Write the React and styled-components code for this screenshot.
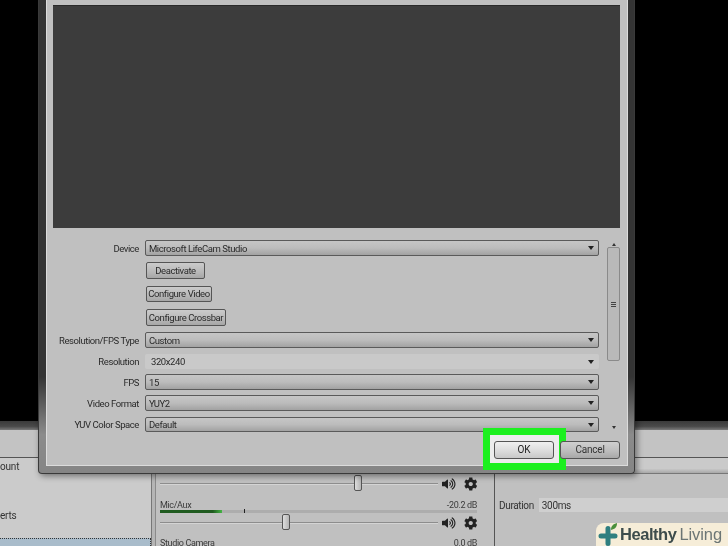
import React from 'react';
import styled, { createGlobalStyle } from 'styled-components';
import { FaVolumeUp, FaCog } from 'react-icons/fa';

const Global = createGlobalStyle`
  html, body { margin: 0; padding: 0; background: #000; }
  * { box-sizing: border-box; }
`;

const Page = styled.div`
  position: relative;
  width: 728px;
  height: 546px;
  overflow: hidden;
  display: flex;
  flex-direction: column;
  background: #c2c2c2;
  font-family: Roboto, "Liberation Sans", sans-serif;
  font-size: 9.5px;
  letter-spacing: -.42px;
  color: #222;
  filter: blur(.3px);
`;

const Preview = styled.div`
  height: 421px;
  flex: none;
  background: #000;
`;
const PreviewEdge = styled.div`
  height: 9px;
  flex: none;
  background: linear-gradient(#3a3a3a, #4a4a4a 60%, #7a7a7a);
`;
const Band = styled.div`
  height: 28px;
  flex: none;
  background: #c3c3c3;
  border-bottom: 1px solid #555;
`;
const Workspace = styled.div`
  flex: 1;
  display: flex;
  min-height: 0;
`;
const ScenePanel = styled.div`
  width: 151px;
  flex: none;
  background: #cbcbcb;
  display: flex;
  flex-direction: column;
  align-items: flex-start;
  padding-top: 3px;
`;
const SceneItem = styled.div`
  height: ${p => p.$h}px;
  white-space: nowrap;
  font-size: 10px;
  letter-spacing: -.2px;
  color: #333;
`;
const SceneSelected = styled.div`
  align-self: stretch;
  flex: 1;
  background: #a9bccb;
  border: 1px dotted #333;
  border-bottom: none;
  border-left: none;
`;
const Splitter = styled.div`
  width: 7px;
  flex: none;
  background: linear-gradient(90deg, #777 0 1px, #b5b5b5 1px 4px, #8a8a8a 4px 5px, #c0c0c0 5px);
`;
const Mixer = styled.div`
  width: 337px;
  flex: none;
  background: #c0c0c0;
  border-right: 1px solid #555;
  padding: 0 17px 0 2px;
  display: flex;
  flex-direction: column;
`;
const Spacer = styled.div`
  height: ${p => p.$h}px;
  flex: none;
`;
const ChannelHead = styled.div`
  height: 11px;
  display: flex;
  justify-content: space-between;
  align-items: center;
  font-size: 9px;
  letter-spacing: -.35px;
  color: #3a3a3a;
  flex: none;
`;
const Meter = styled.div`
  position: relative;
  height: 3px;
  margin: 0;
  flex: none;
  background: #adadad;
`;
const MeterFill = styled.div`
  height: 100%;
  background: linear-gradient(90deg, #1f5a1f 85%, #45b545);
`;
const MeterPeak = styled.div`
  position: absolute;
  top: -1px;
  width: 1px;
  height: 4px;
  background: #222;
`;
const SliderRow = styled.div`
  height: 17px;
  flex: none;
  display: flex;
  align-items: center;
  gap: 4px;
  color: #222;
`;
const Track = styled.div`
  position: relative;
  width: 278px;
  height: 2px;
  background: #8d8d8d;
  border-bottom: 1px solid #d4d4d4;
  flex: none;
`;
const Thumb = styled.div`
  position: absolute;
  top: -8px;
  width: 8px;
  height: 16px;
  border: 1px solid #555;
  border-radius: 2px;
  background: linear-gradient(90deg, #ddd, #b5b5b5);
`;
const TransitionPanel = styled.div`
  flex: 1;
  display: flex;
  flex-direction: column;
  background: #c0c0c0;
`;
const TabStrip = styled.div`
  height: 16px;
  flex: none;
  background: linear-gradient(#cacaca 70%, #a8a8a8);
  border-bottom: 1px solid #777;
`;
const DurationRow = styled.div`
  display: flex;
  align-items: center;
  gap: 5px;
  margin: 24px 0 0 4px;
  font-size: 10px;
  letter-spacing: -.35px;
  color: #333;
`;
const DurationField = styled.div`
  flex: 1;
  height: 14px;
  background: #cfcfcf;
  padding-left: 3px;
  line-height: 15px;
`;

const Dialog = styled.div`
  position: absolute;
  left: 38px;
  top: -8px;
  width: 597px;
  height: 482px;
  padding: 0 6px 7px 7px;
  border: 1px solid #3a3a3a;
  border-top: none;
  border-radius: 0 0 4px 4px;
  background: linear-gradient(#343434 0, #343434 80%, #8b8b8b 92%, #858585);
  box-shadow: 2px 2px 6px rgba(0, 0, 0, .45);
`;
const Client = styled.div`
  height: 100%;
  background: #c0c0c0;
  border: 1px solid #dcdcdc;
  padding: 12px 7px 0 6px;
  display: flex;
  flex-direction: column;
`;
const Screen = styled.div`
  height: 223px;
  flex: none;
  background: #3c3c3c;
  border-top: 1px solid #2a2a2a;
`;
const Props = styled.div`
  margin-top: 12px;
  height: 192px;
  flex: none;
  display: flex;
  gap: 8px;
`;
const Form = styled.div`
  width: 546px;
  flex: none;
  display: flex;
  flex-direction: column;
`;
const Row = styled.div`
  height: ${p => p.$h}px;
  flex: none;
  display: grid;
  grid-template-columns: 86px 454px;
  column-gap: 6px;
  align-items: start;
`;
const Label = styled.div`
  text-align: right;
  white-space: nowrap;
  direction: rtl;
  line-height: ${p => (p.$h || 16) + 1}px;
  color: #2a2a2a;
`;
const Select = styled.div`
  position: relative;
  height: ${p => p.$h || 16}px;
  line-height: ${p => (p.$h || 16) - 1}px;
  padding-left: ${p => (p.$flat ? 5 : 3)}px;
  border: 1px solid ${p => (p.$flat ? 'transparent' : '#5a5a5a')};
  border-radius: 2px;
  background: ${p => p.$flat
    ? '#c9c9c9'
    : 'linear-gradient(#c6c6c6 0, #bcbcbc 50%, #a2a2a2 100%)'};
  color: #2a2a2a;
`;
const Caret = styled.div`
  position: absolute;
  right: 4px;
  top: 50%;
  margin-top: -2px;
  width: 0;
  height: 0;
  border-left: 3.5px solid transparent;
  border-right: 3.5px solid transparent;
  border-top: 4px solid #222;
`;
const SmallButton = styled.div`
  justify-self: start;
  margin-left: 1px;
  height: ${p => p.$h}px;
  line-height: ${p => p.$h - 2}px;
  width: ${p => p.$w}px;
  text-align: center;
  border: 1px solid #555;
  border-radius: 2px;
  background: linear-gradient(#cbcbcb, #b8b8b8 60%, #a6a6a6);
  color: #2a2a2a;
  white-space: nowrap;
`;
const Scrollbar = styled.div`
  width: 13px;
  flex: none;
  display: flex;
  flex-direction: column;
  align-items: center;
  padding: 0 0 3px;
`;
const ArrowUp = styled.div`
  width: 0;
  height: 0;
  flex: none;
  margin-top: 3px;
  border-left: 2.5px solid transparent;
  border-right: 2.5px solid transparent;
  border-bottom: 3px solid #333;
`;
const ArrowDown = styled(ArrowUp)`
  border-bottom: none;
  border-top: 3px solid #333;
  margin-top: auto;
`;
const ScrollThumb = styled.div`
  margin-top: 1px;
  width: 13px;
  height: 114px;
  flex: none;
  border: 1px solid #8a8a8a;
  border-radius: 2px;
  background: #b9b9b9;
  display: flex;
  flex-direction: column;
  align-items: center;
  justify-content: center;
  gap: 1px;
`;
const Grip = styled.div`
  width: 5px;
  height: 1px;
  background: #444;
`;
const Footer = styled.div`
  margin-top: 9px;
  display: flex;
  justify-content: flex-end;
  gap: 6px;
`;
const DialogButton = styled.div`
  position: relative;
  width: 60px;
  height: 18px;
  line-height: 16px;
  text-align: center;
  border: 1px solid #555;
  border-radius: 3px;
  font-size: 10px;
  letter-spacing: -.2px;
  color: #333;
  background: linear-gradient(#cfcfcf, #bdbdbd 55%, #a8a8a8);
`;
const OkButton = styled(DialogButton)`
  background: linear-gradient(#f0f0f0, #dcdcdc 55%, #c8c8c8);
  color: #222;
`;
const Highlight = styled.div`
  position: absolute;
  left: -11px;
  right: -12px;
  top: -13px;
  bottom: -11px;
  border: 7px solid #1cf01f;
  background: #ececec;
  z-index: 0;
`;
const OkLayer = styled.div`
  position: relative;
`;
const OkFace = styled(OkButton)`
  z-index: 1;
`;

const Brand = styled.div`
  position: absolute;
  right: 0;
  bottom: 0;
  width: 132px;
  height: 23px;
  padding-left: 24px;
  display: flex;
  align-items: center;
  gap: 3px;
  background: #f6edd8;
  border-radius: 8px 0 0 0;
  white-space: nowrap;
  line-height: 23px;
  font-family: "Liberation Sans", sans-serif;
  letter-spacing: 0;
`;
const BrandIcon = styled.svg`
  position: absolute;
  left: 0;
  top: 0;
`;
const BrandBold = styled.span`
  font-weight: 700;
  color: #3d4c4c;
  font-size: 16.5px;
  letter-spacing: -.45px;
`;
const BrandLight = styled.span`
  color: #6c7675;
  font-size: 16.5px;
  letter-spacing: -.1px;
`;

const Channel = ({ thumb }) => (
  <SliderRow>
    <Track><Thumb style={{ left: thumb }} /></Track>
    <FaVolumeUp size={14} />
    <FaCog size={14} style={{ marginLeft: 4 }} />
  </SliderRow>
);

const Field = ({ label, value, flat, h, rowH }) => (
  <Row $h={rowH}>
    <Label $h={h}>{label}</Label>
    <Select $flat={flat} $h={h}>{value}<Caret /></Select>
  </Row>
);

const Action = ({ text, w, h, rowH }) => (
  <Row $h={rowH}>
    <span />
    <SmallButton $w={w} $h={h}>{text}</SmallButton>
  </Row>
);

export default function App() {
  return (
    <Page>
      <Global />
      <Preview />
      <PreviewEdge />
      <Band />
      <Workspace>
        <ScenePanel>
          <SceneItem $h={49}>ount</SceneItem>
          <SceneItem $h={28}>erts</SceneItem>
          <SceneSelected />
        </ScenePanel>
        <Splitter />
        <Mixer>
          <Spacer $h={17} />
          <Channel thumb={194} />
          <Spacer $h={7} />
          <ChannelHead><span>Mic/Aux</span><span>-20.2 dB</span></ChannelHead>
          <Meter>
            <MeterFill style={{ width: 62 }} />
            <MeterPeak style={{ left: 84 }} />
          </Meter>
          <Spacer $h={1} />
          <Channel thumb={122} />
          <Spacer $h={6} />
          <ChannelHead><span>Studio Camera</span><span>0.0 dB</span></ChannelHead>
        </Mixer>
        <TransitionPanel>
          <TabStrip />
          <DurationRow>
            Duration
            <DurationField>300ms</DurationField>
          </DurationRow>
        </TransitionPanel>
      </Workspace>

      <Dialog>
        <Client>
          <Screen />
          <Props>
            <Form>
              <Field label="Device" value="Microsoft LifeCam Studio" h={16} rowH={22} />
              <Action text="Deactivate" w={59} h={17} rowH={24} />
              <Action text="Configure Video" w={66} h={16} rowH={23} />
              <Action text="Configure Crossbar" w={80} h={17} rowH={23} />
              <Field label="Resolution/FPS Type" value="Custom" h={16} rowH={22} />
              <Field label="Resolution" value="320x240" flat h={15} rowH={20} />
              <Field label="FPS" value="15" h={16} rowH={21} />
              <Field label="Video Format" value="YUY2" h={16} rowH={22} />
              <Field label="YUV Color Space" value="Default" h={15} rowH={15} />
            </Form>
            <Scrollbar>
              <ArrowUp />
              <ScrollThumb><Grip /><Grip /><Grip /></ScrollThumb>
              <ArrowDown />
            </Scrollbar>
          </Props>
          <Footer>
            <OkLayer>
              <Highlight />
              <OkFace>OK</OkFace>
            </OkLayer>
            <DialogButton>Cancel</DialogButton>
          </Footer>
        </Client>
      </Dialog>

      <Brand>
        <BrandIcon width="24" height="23" viewBox="0 0 24 23">
          <path d="M12 5.5V20.5M5 13H19" stroke="#2f7f80" strokeWidth="5" strokeLinecap="round" fill="none" />
          <path d="M15 7c0-4 2-6 6-7 0 4-2 6-6 7z" fill="#4a8f3a" />
        </BrandIcon>
        <BrandBold>Healthy</BrandBold>
        <BrandLight>Living</BrandLight>
      </Brand>
    </Page>
  );
}
